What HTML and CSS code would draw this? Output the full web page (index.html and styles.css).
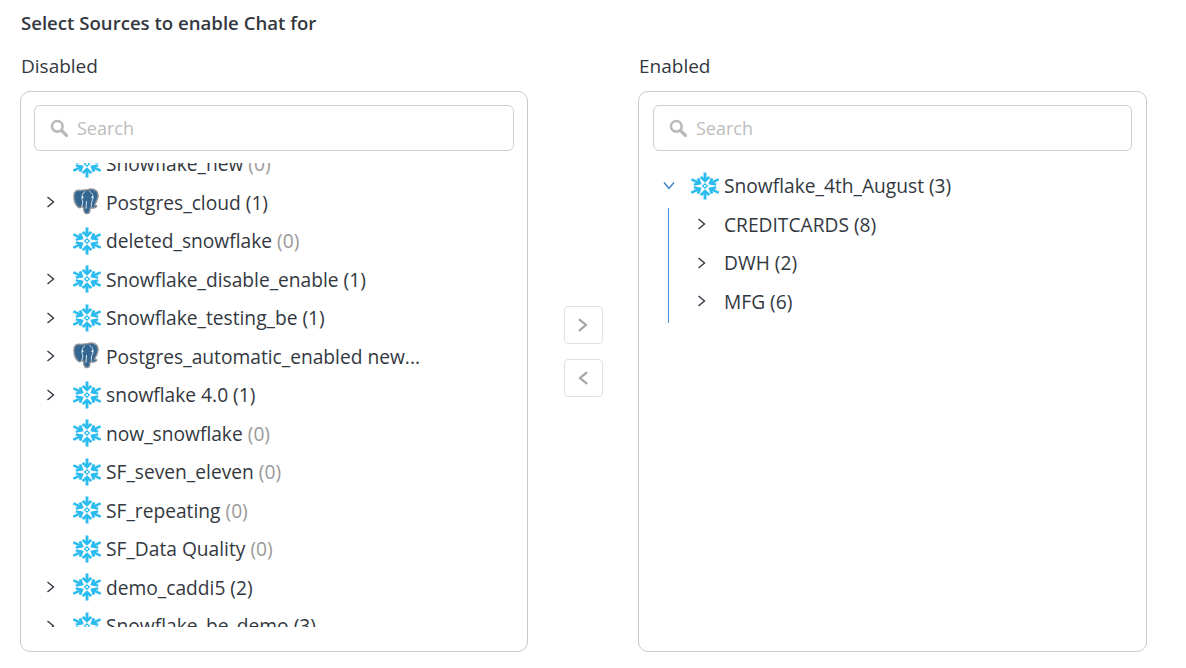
FILE: index.html
```html
<!DOCTYPE html>
<html lang="en">
<head>
<meta charset="utf-8">
<title>Select Sources</title>
<link rel="stylesheet" href="styles.css">
</head>
<body>
<svg class="defs" width="0" height="0" aria-hidden="true">
  <symbol id="snow" viewBox="2.500 0.500 25 29" preserveAspectRatio="none">
    <g fill="none" stroke="#2cbcf0" stroke-width="2.600" stroke-linecap="butt" stroke-linejoin="miter">
      <g id="arm">
        <path d="M15 9.500V1"/>
        <path d="M11.200 5.600 15 9.700l3.800-4.100"/>
      </g>
      <use href="#arm" transform="rotate(60 15 15)"/>
      <use href="#arm" transform="rotate(120 15 15)"/>
      <use href="#arm" transform="rotate(180 15 15)"/>
      <use href="#arm" transform="rotate(240 15 15)"/>
      <use href="#arm" transform="rotate(300 15 15)"/>
    </g>
    <path d="M15 12.800 17.200 15 15 17.200 12.800 15z" fill="none" stroke="#2cbcf0" stroke-width="1.100"/>
  </symbol>
  <symbol id="pg" viewBox="0 0 28 28">
    <path d="M8 2C4 1 1 3 1 8c0 4 2 9 4 11 1.500 1.500 3 1 4-.5 1 .7 1.500 1 2 1.200 0 3 .3 6 3 6.300 2.500.2 3.500-1.500 3.500-4 0-1 .2-1.700 1-2 2 .5 4 .3 5.500-.8 1-.8.500-1.700-.7-1.500-.6 0-1-.2-1-.7 1.200-2 3.700-6 3.700-10 0-4-3.500-6.500-7-6.500-1.500 0-2.500.3-3.500.8C13 1.500 10.500 1.500 8 2z" fill="#336791" stroke="#8d9299" stroke-width="1.500"/>
    <path d="M12.500 3C9.500 5 8.800 9 9.800 12.500c.5 2 .3 4.500-.8 6M17 3c3 1.500 4.500 4.500 3.500 8-.5 1.800-1.500 3-1.500 5 0 1.500.2 2 .2 3M14 13c0 3-.5 5-.5 8" fill="none" stroke="#dfe6ed" stroke-width="1"/>
    <circle cx="20" cy="9" r=".9" fill="#fff"/>
    <circle cx="10" cy="9" r=".9" fill="#fff"/>
  </symbol>
  <symbol id="chev-r" viewBox="0 0 12 12">
    <path d="M2.500 1 8.500 6l-6 5" fill="none" stroke="currentColor"/>
  </symbol>
  <symbol id="search" viewBox="0 0 18 18">
    <circle cx="7.300" cy="7.300" r="5.300" fill="none" stroke="currentColor" stroke-width="2.600"/>
    <path d="m11.500 11.500 5 5" stroke="currentColor" stroke-width="3.200" stroke-linecap="round"/>
  </symbol>
</svg>

<main class="page">
  <h1 class="title">Select Sources to enable Chat for</h1>
  <div class="columns">
    <section class="col col-left">
      <h2 class="col-label">Disabled</h2>
      <div class="panel">
        <div class="searchbox">
          <svg class="search-icon"><use href="#search"/></svg>
          <span class="placeholder">Search</span>
        </div>
        <div class="viewport">
          <ul class="tree scrolled">
            <li class="row"><span class="caret-slot"></span><svg class="icon"><use href="#snow"/></svg><span class="name">Snowflake_new <span class="count">(0)</span></span></li>
            <li class="row"><svg class="caret"><use href="#chev-r"/></svg><svg class="icon pg"><use href="#pg"/></svg><span class="name">Postgres_cloud (1)</span></li>
            <li class="row"><span class="caret-slot"></span><svg class="icon"><use href="#snow"/></svg><span class="name">deleted_snowflake <span class="count">(0)</span></span></li>
            <li class="row"><svg class="caret"><use href="#chev-r"/></svg><svg class="icon"><use href="#snow"/></svg><span class="name">Snowflake_disable_enable (1)</span></li>
            <li class="row"><svg class="caret"><use href="#chev-r"/></svg><svg class="icon"><use href="#snow"/></svg><span class="name">Snowflake_testing_be (1)</span></li>
            <li class="row"><svg class="caret"><use href="#chev-r"/></svg><svg class="icon pg"><use href="#pg"/></svg><span class="name">Postgres_automatic_enabled new...</span></li>
            <li class="row"><svg class="caret"><use href="#chev-r"/></svg><svg class="icon"><use href="#snow"/></svg><span class="name">snowflake 4.0 (1)</span></li>
            <li class="row"><span class="caret-slot"></span><svg class="icon"><use href="#snow"/></svg><span class="name">now_snowflake <span class="count">(0)</span></span></li>
            <li class="row"><span class="caret-slot"></span><svg class="icon"><use href="#snow"/></svg><span class="name">SF_seven_eleven <span class="count">(0)</span></span></li>
            <li class="row"><span class="caret-slot"></span><svg class="icon"><use href="#snow"/></svg><span class="name">SF_repeating <span class="count">(0)</span></span></li>
            <li class="row"><span class="caret-slot"></span><svg class="icon"><use href="#snow"/></svg><span class="name">SF_Data Quality <span class="count">(0)</span></span></li>
            <li class="row"><svg class="caret"><use href="#chev-r"/></svg><svg class="icon"><use href="#snow"/></svg><span class="name">demo_caddi5 (2)</span></li>
            <li class="row"><svg class="caret"><use href="#chev-r"/></svg><svg class="icon"><use href="#snow"/></svg><span class="name">Snowflake_be_demo (3)</span></li>
          </ul>
        </div>
      </div>
    </section>

    <div class="transfer">
      <button class="move" type="button" aria-label="Enable"><svg class="move-icon"><use href="#chev-r"/></svg></button>
      <button class="move" type="button" aria-label="Disable"><svg class="move-icon flip"><use href="#chev-r"/></svg></button>
    </div>

    <section class="col col-right">
      <h2 class="col-label">Enabled</h2>
      <div class="panel">
        <div class="searchbox">
          <svg class="search-icon"><use href="#search"/></svg>
          <span class="placeholder">Search</span>
        </div>
        <div class="viewport">
          <ul class="tree enabled">
            <li class="row"><svg class="caret open"><use href="#chev-r"/></svg><svg class="icon"><use href="#snow"/></svg><span class="name">Snowflake_4th_August (3)</span></li>
            <li>
              <ul class="children">
                <li class="row child"><svg class="caret"><use href="#chev-r"/></svg><span class="name">CREDITCARDS (8)</span></li>
                <li class="row child"><svg class="caret"><use href="#chev-r"/></svg><span class="name">DWH (2)</span></li>
                <li class="row child"><svg class="caret"><use href="#chev-r"/></svg><span class="name">MFG (6)</span></li>
              </ul>
            </li>
          </ul>
        </div>
      </div>
    </section>
  </div>
</main>
</body>
</html>
```

FILE: styles.css
```css
* { box-sizing: border-box; }

html, body {
  margin: 0;
  padding: 0;
  background: #fff;
}

body {
  width: 1186px;
  height: 668px;
  overflow: hidden;
  font-family: "Open Sans", sans-serif;
  color: #33383f;
}

.defs { position: absolute; }

.page { padding: 10px 0 0 20px; }

.title {
  margin: 0 0 18px 1px;
  font-size: 18.6px;
  line-height: 26px;
  font-weight: 600;
  color: #33383f;
}

.columns {
  display: flex;
  align-items: flex-start;
}

.col-left { width: 508px; }
.col-right { width: 509px; }

.col-label {
  margin: 0 0 13px 1px;
  font-size: 19px;
  line-height: 24px;
  font-weight: 400;
}

.panel {
  height: 561px;
  padding: 13px 13px 0;
  border: 1px solid #c9c9c9;
  border-radius: 10px;
}

.col-right .panel { padding: 13px 14px 0; }

.searchbox {
  display: flex;
  align-items: center;
  gap: 9px;
  height: 46px;
  padding-left: 15px;
  border: 1px solid #cfcfcf;
  border-radius: 6px;
}

.search-icon {
  width: 18px;
  height: 18px;
  color: #b9b9b9;
}

.placeholder {
  font-size: 18px;
  color: #bdbdbd;
}

.viewport {
  height: 464px;
  margin-top: 12px;
  overflow: hidden;
}

.tree, .children {
  margin: 0;
  padding: 0;
  list-style: none;
}

.scrolled { margin-top: -18.5px; }

.enabled { margin-top: 3.5px; }

.row {
  display: flex;
  align-items: center;
  height: 38.5px;
  font-size: 19.2px;
  white-space: nowrap;
}

.caret, .caret-slot {
  flex: none;
  width: 12px;
  height: 12px;
  margin: 0 16px 0 11px;
  color: #33383f;
  stroke-width: 1.4;
}

.icon {
  flex: none;
  width: 28px;
  height: 28px;
  margin-right: 5px;
}

.pg { width: 27px; margin-right: 6px; }

.count { color: #9a9a9a; }

.caret.open {
  transform: rotate(90deg);
  color: #3f7fc4;
  margin: 0 16px 0 10px;
}

.children {
  display: flow-root;
  margin-top: 2.75px;
  margin-left: 15px;
  border-left: 1px solid #4a90d9;
  height: 115px;
}

.child:first-child { margin-top: -2.75px; }

.child .caret { margin: 0 16px 0 27px; }

.transfer {
  flex: none;
  width: 110px;
  display: flex;
  flex-direction: column;
  align-items: center;
  gap: 15px;
  padding-top: 252px;
}

.move {
  display: flex;
  align-items: center;
  justify-content: center;
  width: 39px;
  height: 38px;
  padding: 0;
  background: #fff;
  border: 1px solid #e2e2e2;
  border-radius: 4px;
}

.move-icon {
  width: 14px;
  height: 14px;
  color: #a5a5a5;
  stroke-width: 1.9;
}

.flip { transform: scaleX(-1); }
```
